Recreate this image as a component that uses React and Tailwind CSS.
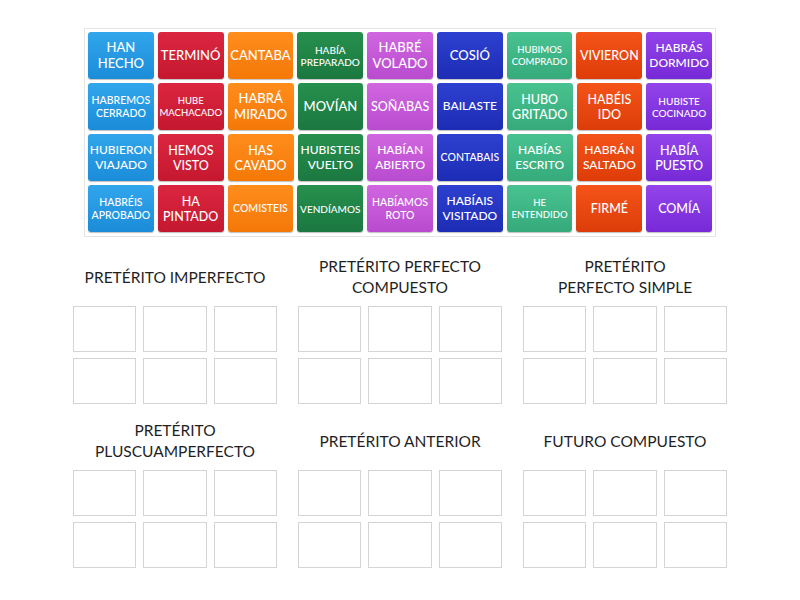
const colors = [
  "from-[#31a6ec] to-[#1b8cd8]",
  "from-[#dc2640] to-[#c4182f]",
  "from-[#ff8d1c] to-[#f47806]",
  "from-[#26904e] to-[#1b7840]",
  "from-[#d166e0] to-[#b84bcf]",
  "from-[#2d40d0] to-[#1d2cb4]",
  "from-[#48c290] to-[#36aa7b]",
  "from-[#f45418] to-[#dd3c08]",
  "from-[#9443ea] to-[#7629d6]",
];

// [text, font size class]
const rows = [
  [
    ["HAN HECHO", "text-[13px]"],
    ["TERMINÓ", "text-[13px]"],
    ["CANTABA", "text-[13px]"],
    ["HABÍA PREPARADO", "text-[10px]"],
    ["HABRÉ VOLADO", "text-[13px]"],
    ["COSIÓ", "text-[13px]"],
    ["HUBIMOS COMPRADO", "text-[9.5px]"],
    ["VIVIERON", "text-[12.5px]"],
    ["HABRÁS DORMIDO", "text-[12px]"],
  ],
  [
    ["HABREMOS CERRADO", "text-[10.5px]"],
    ["HUBE MACHACADO", "text-[9.5px]"],
    ["HABRÁ MIRADO", "text-[13px]"],
    ["MOVÍAN", "text-[13px]"],
    ["SOÑABAS", "text-[12.5px]"],
    ["BAILASTE", "text-[12px]"],
    ["HUBO GRITADO", "text-[12.5px]"],
    ["HABÉIS IDO", "text-[12.5px]"],
    ["HUBISTE COCINADO", "text-[10px]"],
  ],
  [
    ["HUBIERON VIAJADO", "text-[12px]"],
    ["HEMOS VISTO", "text-[12.5px]"],
    ["HAS CAVADO", "text-[12.5px]"],
    ["HUBISTEIS VUELTO", "text-[12px]"],
    ["HABÍAN ABIERTO", "text-[12px]"],
    ["CONTABAIS", "text-[10.5px]"],
    ["HABÍAS ESCRITO", "text-[12px]"],
    ["HABRÁN SALTADO", "text-[12px]"],
    ["HABÍA PUESTO", "text-[12.5px]"],
  ],
  [
    ["HABRÉIS APROBADO", "text-[10.5px]"],
    ["HA PINTADO", "text-[12.5px]"],
    ["COMISTEIS", "text-[10.5px]"],
    ["VENDÍAMOS", "text-[10px]"],
    ["HABÍAMOS ROTO", "text-[10.5px]"],
    ["HABÍAIS VISITADO", "text-[12px]"],
    ["HE ENTENDIDO", "text-[9.5px]"],
    ["FIRMÉ", "text-[12.5px]"],
    ["COMÍA", "text-[12.5px]"],
  ],
];

const groups = [
  [["PRETÉRITO IMPERFECTO"], ["PRETÉRITO PERFECTO", "COMPUESTO"], ["PRETÉRITO", "PERFECTO SIMPLE"]],
  [["PRETÉRITO", "PLUSCUAMPERFECTO"], ["PRETÉRITO ANTERIOR"], ["FUTURO COMPUESTO"]],
];

function Group({ title }) {
  return (
    <div className="w-[204px] flex flex-col">
      <div className="h-[46px] flex flex-col items-center justify-center text-[15.5px] leading-[21px] text-[#1f1f1f] text-center">
        {title.map((t) => (
          <div key={t}>{t}</div>
        ))}
      </div>
      <div className="mt-[6px] grid grid-cols-3 gap-x-[7px] gap-y-[6px]">
        {Array.from({ length: 6 }).map((_, i) => (
          <div key={i} className="h-[46px] bg-white border border-[#d4d4d4]" />
        ))}
      </div>
    </div>
  );
}

export default function App() {
  return (
    <div className="w-[800px] h-[600px] bg-white font-['Lato','Open_Sans',sans-serif] pt-[28px]">
      <div className="mx-[84px] w-[632px] h-[209px] border border-[#e4e4e4] p-[3px] flex flex-col gap-[4px]">
        {rows.map((row, r) => (
          <div key={r} className="flex gap-[4px]">
            {row.map(([text, size], c) => (
              <div
                key={c}
                className={`w-[66px] h-[47px] rounded-[3px] bg-linear-to-b ${colors[c]} shadow-[0_1px_1px_rgba(0,0,0,0.25)] flex items-center justify-center text-center text-white font-medium leading-[1.2] px-[2px] ${size}`}
              >
                {text}
              </div>
            ))}
          </div>
        ))}
      </div>

      <div className="mt-[17px] flex flex-col gap-[14px]">
        {groups.map((g, i) => (
          <div key={i} className="flex justify-center gap-[21px]">
            {g.map((title, j) => (
              <Group key={j} title={title} />
            ))}
          </div>
        ))}
      </div>
    </div>
  );
}
